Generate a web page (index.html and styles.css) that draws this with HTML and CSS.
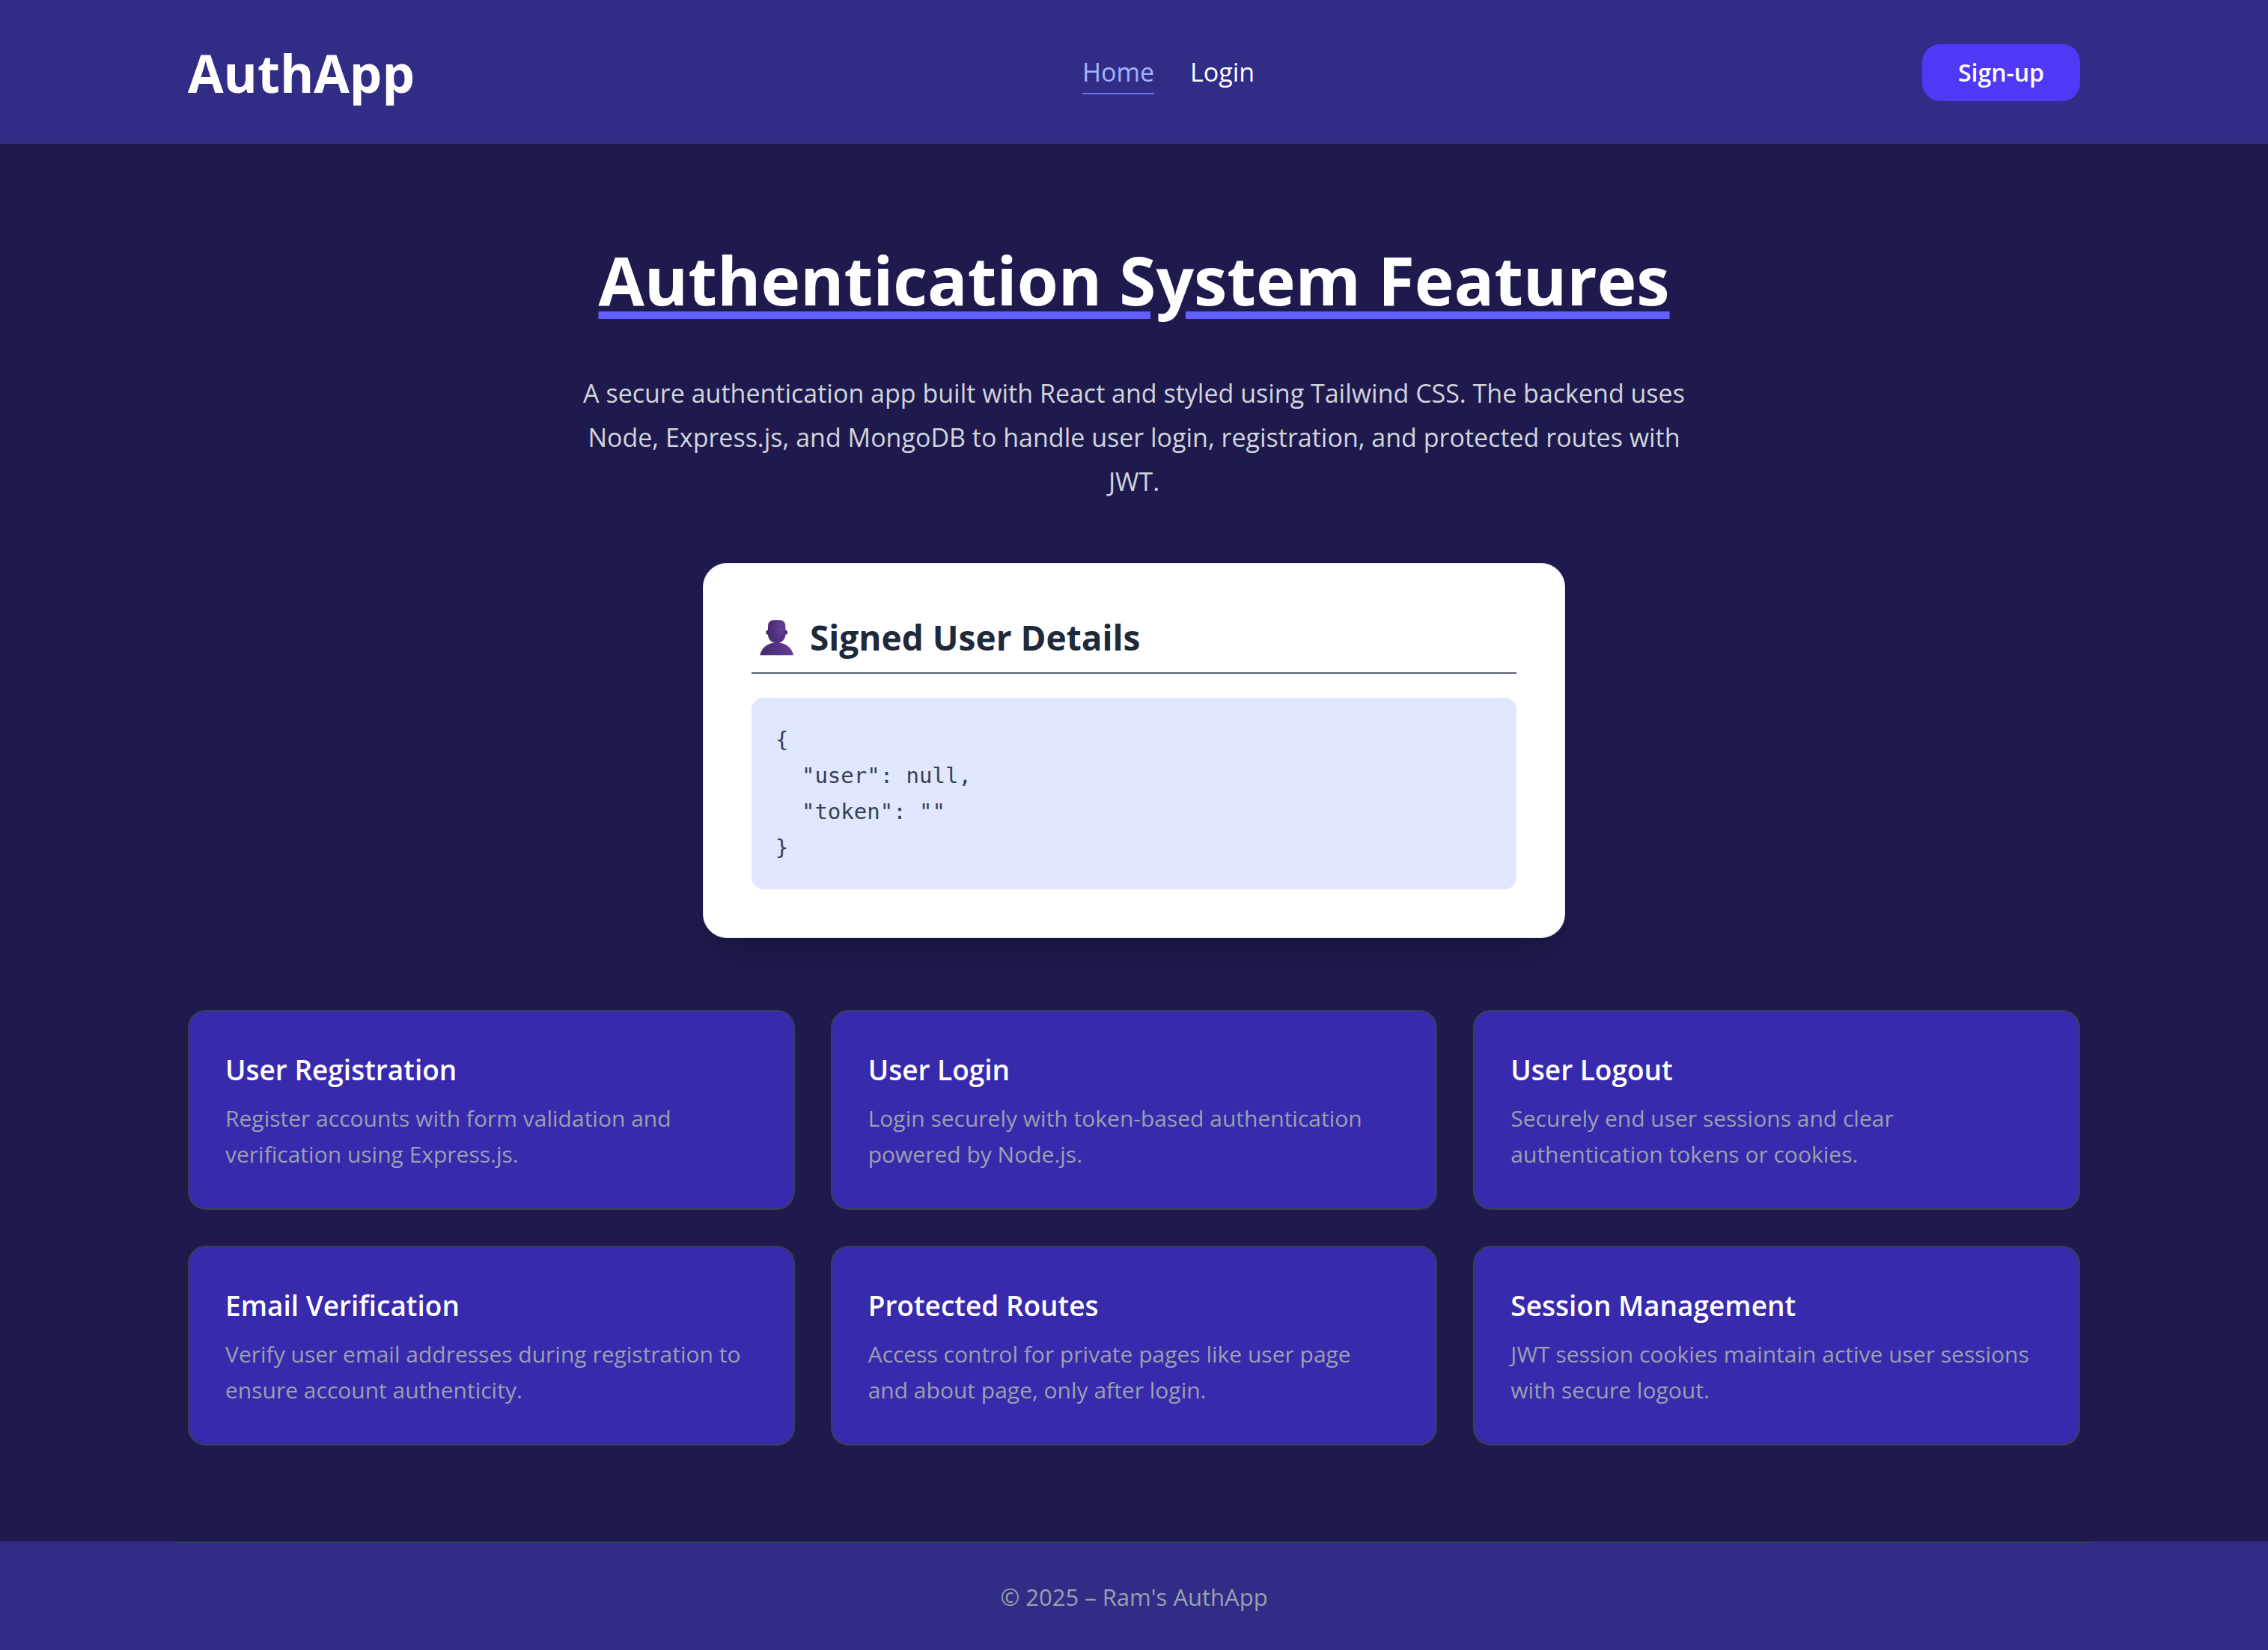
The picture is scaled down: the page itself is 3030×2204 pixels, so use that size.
FILE: index.html
```html
<!DOCTYPE html>
<html lang="en">
<head>
  <meta charset="utf-8">
  <meta name="viewport" content="width=device-width, initial-scale=1">
  <title>AuthApp</title>
  <link rel="stylesheet" href="styles.css">
</head>
<body>
  <header class="site-header">
    <div class="container header-row">
      <a class="logo" href="#">AuthApp</a>
      <nav class="nav" aria-label="Main">
        <a class="nav-link nav-link-active" href="#" aria-current="page">Home</a>
        <a class="nav-link" href="#login">Login</a>
      </nav>
      <button class="signup" type="button">Sign-up</button>
    </div>
  </header>

  <main class="main container">
    <h1 class="title">Authentication System Features</h1>
    <p class="intro">A secure authentication app built with React and styled using Tailwind CSS. The backend uses Node, Express.js, and MongoDB to handle user login, registration, and protected routes with JWT.</p>

    <section class="user-card" aria-labelledby="user-heading">
      <h2 class="user-heading" id="user-heading">
        <svg class="user-icon" viewBox="12 45 198 159" aria-hidden="true">
          <defs>
            <linearGradient id="body" x1="0" y1="0" x2="1" y2="0">
              <stop offset="0" stop-color="#452a6b"/>
              <stop offset="1" stop-color="#643c98"/>
            </linearGradient>
            <radialGradient id="head" cx="0.75" cy="0.4" r="0.75">
              <stop offset="0" stop-color="#633c97"/>
              <stop offset="1" stop-color="#482b70"/>
            </radialGradient>
          </defs>
          <ellipse cx="77" cy="104" rx="7" ry="9" fill="#42286a"/>
          <ellipse cx="149" cy="104" rx="7" ry="9" fill="#42286a"/>
          <path d="M46 196C52 164 80 145 113 145S174 164 180 196Z" fill="url(#body)"/>
          <path d="M78 80C78 64 88 55 102 55H124C138 55 148 64 148 80V112C148 132 134 147 113 147S78 132 78 112Z" fill="url(#head)"/>
          <rect x="116" y="67" width="24" height="10" rx="5" fill="#6a45a6" opacity="0.6"/>
        </svg>
        <span>Signed User Details</span>
      </h2>
      <pre class="user-data">{
  "user": null,
  "token": ""
}</pre>
    </section>

    <section class="features" aria-label="Features">
      <article class="feature">
        <h3 class="feature-title">User Registration</h3>
        <p class="feature-text">Register accounts with form validation and verification using Express.js.</p>
      </article>
      <article class="feature">
        <h3 class="feature-title">User Login</h3>
        <p class="feature-text">Login securely with token-based authentication powered by Node.js.</p>
      </article>
      <article class="feature">
        <h3 class="feature-title">User Logout</h3>
        <p class="feature-text">Securely end user sessions and clear authentication tokens or cookies.</p>
      </article>
      <article class="feature">
        <h3 class="feature-title">Email Verification</h3>
        <p class="feature-text">Verify user email addresses during registration to ensure account authenticity.</p>
      </article>
      <article class="feature">
        <h3 class="feature-title">Protected Routes</h3>
        <p class="feature-text">Access control for private pages like user page and about page, only after login.</p>
      </article>
      <article class="feature">
        <h3 class="feature-title">Session Management</h3>
        <p class="feature-text">JWT session cookies maintain active user sessions with secure logout.</p>
      </article>
    </section>
  </main>

  <footer class="site-footer">
    <p class="container footer-text">© 2025 – Ram's AuthApp</p>
  </footer>
</body>
</html>
```
FILE: styles.css
```css
*,
*::before,
*::after {
  box-sizing: border-box;
}

body {
  margin: 0;
  min-height: 100vh;
  display: flex;
  flex-direction: column;
  background: #1e1a4d;
  color: #ffffff;
  font-family: "Segoe UI", "Open Sans", "Noto Sans", sans-serif;
  font-size: 30px;
  line-height: 48px;
}

h1,
h2,
h3,
p,
pre {
  margin: 0;
}

.container {
  width: 100%;
  max-width: 2560px;
  margin: 0 auto;
  padding-left: 16px;
  padding-right: 16px;
}

/* Header */
.site-header {
  background: #312c85;
  padding: 43px 0 41px;
}

.header-row {
  display: flex;
  align-items: center;
  justify-content: space-between;
}

.logo {
  color: #ffffff;
  font-size: 69px;
  font-weight: 700;
  line-height: 108px;
  text-decoration: none;
}

.nav {
  display: flex;
  gap: 48px;
}

.nav-link {
  border-bottom: 2px solid transparent;
  color: #ffffff;
  font-size: 34px;
  line-height: 56px;
  text-decoration: none;
}

.nav-link-active {
  border-bottom-color: #6d76ee;
  color: #a3b3ff;
}

.signup {
  padding: 14px 48px;
  border: 0;
  border-radius: 24px;
  background: #4f39f6;
  color: #ffffff;
  font: inherit;
  font-size: 32px;
  font-weight: 600;
  cursor: pointer;
}

/* Main */
.main {
  flex: 1 0 auto;
  padding-top: 128px;
  padding-bottom: 128px;
}

.title {
  margin-bottom: 68px;
  font-size: 89px;
  font-weight: 700;
  line-height: 108px;
  text-align: center;
  text-decoration: underline;
  text-decoration-color: #615fff;
  text-decoration-thickness: 10px;
  text-underline-offset: 8px;
}

.intro {
  max-width: 1536px;
  margin: 0 auto 79px;
  color: #d1d5dc;
  font-size: 34px;
  line-height: 59px;
  text-align: center;
}

/* Signed-in user */
.user-card {
  max-width: 1152px;
  margin: 0 auto 96px;
  padding: 64px;
  border: 1px solid #e5e7eb;
  border-radius: 32px;
  background: #ffffff;
  box-shadow: 0 40px 50px -10px rgba(0, 0, 0, 0.1), 0 16px 20px -12px rgba(0, 0, 0, 0.1);
}

.user-heading {
  display: flex;
  align-items: center;
  gap: 12px;
  margin-bottom: 32px;
  padding-bottom: 12px;
  border-bottom: 2px solid #5b6472;
  color: #1e2939;
  font-size: 46px;
  font-weight: 700;
  line-height: 69px;
}

.user-icon {
  width: 66px;
  height: 53px;
}

.user-data {
  padding: 32px;
  border-radius: 16px;
  background: #e0e7ff;
  color: #364153;
  font-family: "DejaVu Sans Mono", monospace;
  font-size: 29px;
  line-height: 48px;
  overflow-x: auto;
}

/* Feature grid */
.features {
  display: grid;
  grid-template-columns: repeat(3, 1fr);
  gap: 48px;
}

.feature {
  padding: 48px;
  border: 2px solid #364153;
  border-radius: 24px;
  background: #372aac;
}

.feature-title {
  margin-bottom: 12px;
  font-size: 37px;
  font-weight: 600;
  line-height: 59px;
}

.feature-text {
  padding-right: 12px;
  color: #99a1af;
}

/* Footer */
.site-footer {
  background: #312c85;
}

.footer-text {
  padding-top: 48px;
  padding-bottom: 47px;
  border-top: 2px solid #364153;
  color: #99a1af;
  font-size: 31px;
  text-align: center;
}

@media (max-width: 1400px) {
  .features {
    grid-template-columns: 1fr;
  }
}
```
